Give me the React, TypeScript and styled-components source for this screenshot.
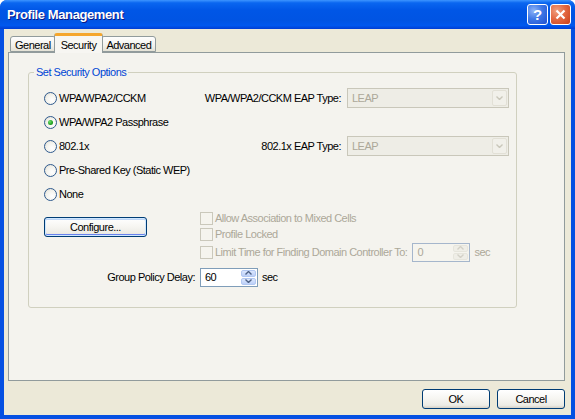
import React from "react";
import styled, { createGlobalStyle } from "styled-components";

const GlobalStyle = createGlobalStyle`
  html, body { margin: 0; padding: 0; }
  body {
    width: 575px;
    height: 419px;
    overflow: hidden;
    font-family: "Liberation Sans", Arial, sans-serif;
    font-size: 11px;
    letter-spacing: -0.5px;
    color: #000;
    background: #fff;
  }
  * { box-sizing: border-box; }
`;

const Window = styled.div`
  width: 575px;
  height: 419px;
  display: flex;
  flex-direction: column;
  background: #0550e2;
  border-radius: 7px 7px 0 0;
  overflow: hidden;
`;

const TitleBar = styled.div`
  flex: none;
  height: 29px;
  display: flex;
  align-items: center;
  gap: 2px;
  padding: 0 4px 0 7px;
  background: linear-gradient(
    180deg,
    #3d95ff 0%,
    #0a66f0 10%,
    #0056e6 35%,
    #0054e3 70%,
    #0058ee 88%,
    #003ed4 100%
  );
`;

const Title = styled.div`
  flex: 1;
  color: #fff;
  font-weight: bold;
  font-size: 13px;
  letter-spacing: -0.4px;
  text-shadow: 1px 1px 0 #0a1883;
`;

const CaptionButton = styled.div<{ $kind: "help" | "close" }>`
  width: 21px;
  height: 21px;
  border: 1px solid #fff;
  border-radius: 3px;
  display: flex;
  align-items: center;
  justify-content: center;
  color: #fff;
  font-weight: bold;
  font-size: 15px;
  letter-spacing: 0;
  background: ${(p) =>
    p.$kind === "close"
      ? "radial-gradient(circle at 30% 30%, #f0a080 0%, #e46a43 45%, #c93f18 100%)"
      : "radial-gradient(circle at 30% 30%, #8fb4f7 0%, #3f78e6 45%, #1f4fd0 100%)"};
`;

const Client = styled.div`
  flex: 1;
  margin: 0 4px 4px 4px;
  background: #ece9d8;
  display: flex;
  flex-direction: column;
  padding: 4px 6px 0 4px;
`;

const TabStrip = styled.div`
  flex: none;
  height: 19px;
  display: flex;
  align-items: flex-end;
  padding-left: 2px;
  position: relative;
  z-index: 1;
`;

const Tab = styled.div<{ $active?: boolean }>`
  height: ${(p) => (p.$active ? "20px" : "16px")};
  margin: ${(p) => (p.$active ? "0 -2px -1px -2px" : "0")};
  padding: ${(p) => (p.$active ? "1px 6px 0" : "1px 4px 0")};
  display: flex;
  align-items: center;
  justify-content: center;
  border: 1px solid #919b9c;
  border-bottom: ${(p) => (p.$active ? "none" : "1px solid #919b9c")};
  border-top: ${(p) => (p.$active ? "3px solid #f5a62c" : "1px solid #919b9c")};
  border-radius: 3px 3px 0 0;
  background: ${(p) =>
    p.$active ? "#f7f6f2" : "linear-gradient(180deg, #fefefe 0%, #f2f1ec 60%, #e4e2d6 100%)"};
  position: relative;
  z-index: ${(p) => (p.$active ? 2 : 1)};
  white-space: nowrap;
`;

const Panel = styled.div`
  flex: none;
  height: 329px;
  border: 1px solid #919b9c;
  background: #f4f3ee;
  padding: 19px 47px 0 19px;
`;

const Group = styled.div`
  position: relative;
  height: 236px;
  border: 1px solid #d0d0bf;
  border-radius: 3px;
  padding: 13px 7px 0 15px;
`;

const GroupTitle = styled.span`
  position: absolute;
  top: -7px;
  left: 5px;
  padding: 0 2px;
  background: #f4f3ee;
  color: #0046d5;
  line-height: 13px;
`;

const OptionRow = styled.div`
  height: 24px;
  display: flex;
  align-items: center;
`;

const RadioCircle = styled.span<{ $checked?: boolean }>`
  flex: none;
  width: 13px;
  height: 13px;
  border-radius: 50%;
  border: 1px solid #2f5a8e;
  background: radial-gradient(circle at 65% 65%, #ffffff 0%, #f3f2ec 55%, #d8d5c8 100%);
  display: flex;
  align-items: center;
  justify-content: center;
  margin-right: 2px;

  &::after {
    content: "";
    display: ${(p) => (p.$checked ? "block" : "none")};
    width: 5px;
    height: 5px;
    border-radius: 50%;
    background: radial-gradient(circle at 35% 35%, #6fe06f 0%, #21a121 60%, #1a7c1a 100%);
  }
`;

const OptionLabel = styled.span<{ $grow?: boolean }>`
  flex: ${(p) => (p.$grow ? 1 : "none")};
  white-space: nowrap;
`;

const FieldLabel = styled.span`
  white-space: nowrap;
  margin-right: 6px;
`;

const Select = styled.div`
  flex: none;
  width: 162px;
  height: 20px;
  border: 1px solid #c9c7ba;
  background: #eeede6;
  display: flex;
  align-items: center;
  padding: 1px;
`;

const SelectText = styled.span`
  flex: 1;
  color: #aca899;
  padding-left: 3px;
`;

const SelectArrow = styled.span`
  flex: none;
  width: 15px;
  height: 16px;
  border: 1px solid #e2e0d6;
  border-radius: 2px;
  background: #f1f0ea;
  display: flex;
  align-items: center;
  justify-content: center;
`;

const Lower = styled.div`
  margin-top: 4px;
  display: flex;
`;

const Button = styled.button<{ $default?: boolean; $width: number }>`
  width: ${(p) => p.$width}px;
  height: 20px;
  padding: 0;
  border: 1px solid #003c74;
  border-radius: 3px;
  font: inherit;
  letter-spacing: inherit;
  color: #000;
  background: linear-gradient(180deg, #ffffff 0%, #f6f5f1 50%, #ecebe5 85%, #d6d0c5 100%);
  box-shadow: ${(p) =>
    p.$default
      ? "inset 0 0 0 1px #cee7ff, inset 0 -1px 0 1px #6982ee, inset 0 1px 0 1px #bcd4f6"
      : "none"};
`;

const ConfigureCol = styled.div`
  flex: none;
  padding-top: 7px;
  margin-right: 53px;
`;

const CheckCol = styled.div`
  display: flex;
  flex-direction: column;
`;

const CheckRow = styled.div<{ $tall?: boolean }>`
  height: ${(p) => (p.$tall ? "20px" : "16px")};
  display: flex;
  align-items: center;
  color: #aca899;
  white-space: nowrap;
`;

const CheckBox = styled.span`
  flex: none;
  width: 13px;
  height: 13px;
  border: 1px solid #cac8bb;
  background: #f5f4ee;
  margin-right: 2px;
`;

const Spinner = styled.div<{ $disabled?: boolean }>`
  flex: none;
  width: 58px;
  height: 19px;
  border: 1px solid ${(p) => (p.$disabled ? "#a5b6cc" : "#7f9db9")};
  background: ${(p) => (p.$disabled ? "#f5f4ee" : "#fff")};
  display: flex;
  align-items: stretch;
  padding: 1px;
`;

const SpinnerValue = styled.span<{ $disabled?: boolean }>`
  flex: 1;
  display: flex;
  align-items: center;
  padding-left: 3px;
  color: ${(p) => (p.$disabled ? "#aca899" : "#000")};
`;

const SpinButtons = styled.span<{ $disabled?: boolean }>`
  flex: none;
  width: 15px;
  display: flex;
  flex-direction: column;
  gap: 1px;
  opacity: ${(p) => (p.$disabled ? 0.45 : 1)};
`;

const SpinHalf = styled.span<{ $disabled?: boolean }>`
  flex: 1;
  border-radius: 2px;
  background: ${(p) =>
    p.$disabled ? "#e8e7e0" : "linear-gradient(180deg, #dbe6fd 0%, #bcd0f8 100%)"};
  border: 1px solid ${(p) => (p.$disabled ? "#d6d4c8" : "#b2c8f2")};
  display: flex;
  align-items: center;
  justify-content: center;
`;

const Unit = styled.span<{ $disabled?: boolean }>`
  margin-left: 4px;
  color: ${(p) => (p.$disabled ? "#aca899" : "#000")};
`;

const Gap = styled.span<{ $w: number }>`
  flex: none;
  width: ${(p) => p.$w}px;
`;

const PolicyRow = styled.div`
  margin-top: 5px;
  height: 20px;
  display: flex;
  align-items: center;
`;

const PolicyLabel = styled.span`
  width: 151px;
  text-align: right;
  margin-right: 5px;
  white-space: nowrap;
`;

const Footer = styled.div`
  margin-top: 8px;
  display: flex;
  justify-content: flex-end;
  gap: 7px;
`;

const Chevron: React.FC<{ up?: boolean; color: string }> = ({ up, color }) => (
  <svg width="7" height="4" viewBox="0 0 7 4">
    <path
      d={up ? "M0.5 3.5 L3.5 0.5 L6.5 3.5" : "M0.5 0.5 L3.5 3.5 L6.5 0.5"}
      fill="none"
      stroke={color}
      strokeWidth="1.4"
    />
  </svg>
);

const DisabledSelect: React.FC<{ value: string }> = ({ value }) => (
  <Select>
    <SelectText>{value}</SelectText>
    <SelectArrow>
      <Chevron color="#c9c7ba" />
    </SelectArrow>
  </Select>
);

const SpinBox: React.FC<{ value: string; disabled?: boolean }> = ({ value, disabled }) => (
  <Spinner $disabled={disabled}>
    <SpinnerValue $disabled={disabled}>{value}</SpinnerValue>
    <SpinButtons $disabled={disabled}>
      <SpinHalf $disabled={disabled}>
        <Chevron up color={disabled ? "#aca899" : "#4d6185"} />
      </SpinHalf>
      <SpinHalf $disabled={disabled}>
        <Chevron color={disabled ? "#aca899" : "#4d6185"} />
      </SpinHalf>
    </SpinButtons>
  </Spinner>
);

export default function App() {
  return (
    <>
      <GlobalStyle />
      <Window>
        <TitleBar>
          <Title>Profile Management</Title>
          <CaptionButton $kind="help">?</CaptionButton>
          <CaptionButton $kind="close">
            <svg width="11" height="11" viewBox="0 0 11 11">
              <path d="M1.5 1.5 L9.5 9.5 M9.5 1.5 L1.5 9.5" stroke="#fff" strokeWidth="2.2" />
            </svg>
          </CaptionButton>
        </TitleBar>
        <Client>
          <TabStrip>
            <Tab>General</Tab>
            <Tab $active>Security</Tab>
            <Tab>Advanced</Tab>
          </TabStrip>
          <Panel>
            <Group>
              <GroupTitle>Set Security Options</GroupTitle>
              <OptionRow>
                <RadioCircle />
                <OptionLabel $grow>WPA/WPA2/CCKM</OptionLabel>
                <FieldLabel>WPA/WPA2/CCKM EAP Type:</FieldLabel>
                <DisabledSelect value="LEAP" />
              </OptionRow>
              <OptionRow>
                <RadioCircle $checked />
                <OptionLabel>WPA/WPA2 Passphrase</OptionLabel>
              </OptionRow>
              <OptionRow>
                <RadioCircle />
                <OptionLabel $grow>802.1x</OptionLabel>
                <FieldLabel>802.1x EAP Type:</FieldLabel>
                <DisabledSelect value="LEAP" />
              </OptionRow>
              <OptionRow>
                <RadioCircle />
                <OptionLabel>Pre-Shared Key (Static WEP)</OptionLabel>
              </OptionRow>
              <OptionRow>
                <RadioCircle />
                <OptionLabel>None</OptionLabel>
              </OptionRow>
              <Lower>
                <ConfigureCol>
                  <Button $default $width={103}>Configure...</Button>
                </ConfigureCol>
                <CheckCol>
                  <CheckRow>
                    <CheckBox />
                    Allow Association to Mixed Cells
                  </CheckRow>
                  <CheckRow>
                    <CheckBox />
                    Profile Locked
                  </CheckRow>
                  <CheckRow $tall>
                    <CheckBox />
                    Limit Time for Finding Domain Controller To:
                    <Gap $w={5} />
                    <SpinBox value="0" disabled />
                    <Unit $disabled>sec</Unit>
                  </CheckRow>
                </CheckCol>
              </Lower>
              <PolicyRow>
                <PolicyLabel>Group Policy Delay:</PolicyLabel>
                <SpinBox value="60" />
                <Unit>
                  <Gap $w={3} />
                  sec
                </Unit>
              </PolicyRow>
            </Group>
          </Panel>
          <Footer>
            <Button $width={68}>OK</Button>
            <Button $width={68}>Cancel</Button>
          </Footer>
        </Client>
      </Window>
    </>
  );
}
